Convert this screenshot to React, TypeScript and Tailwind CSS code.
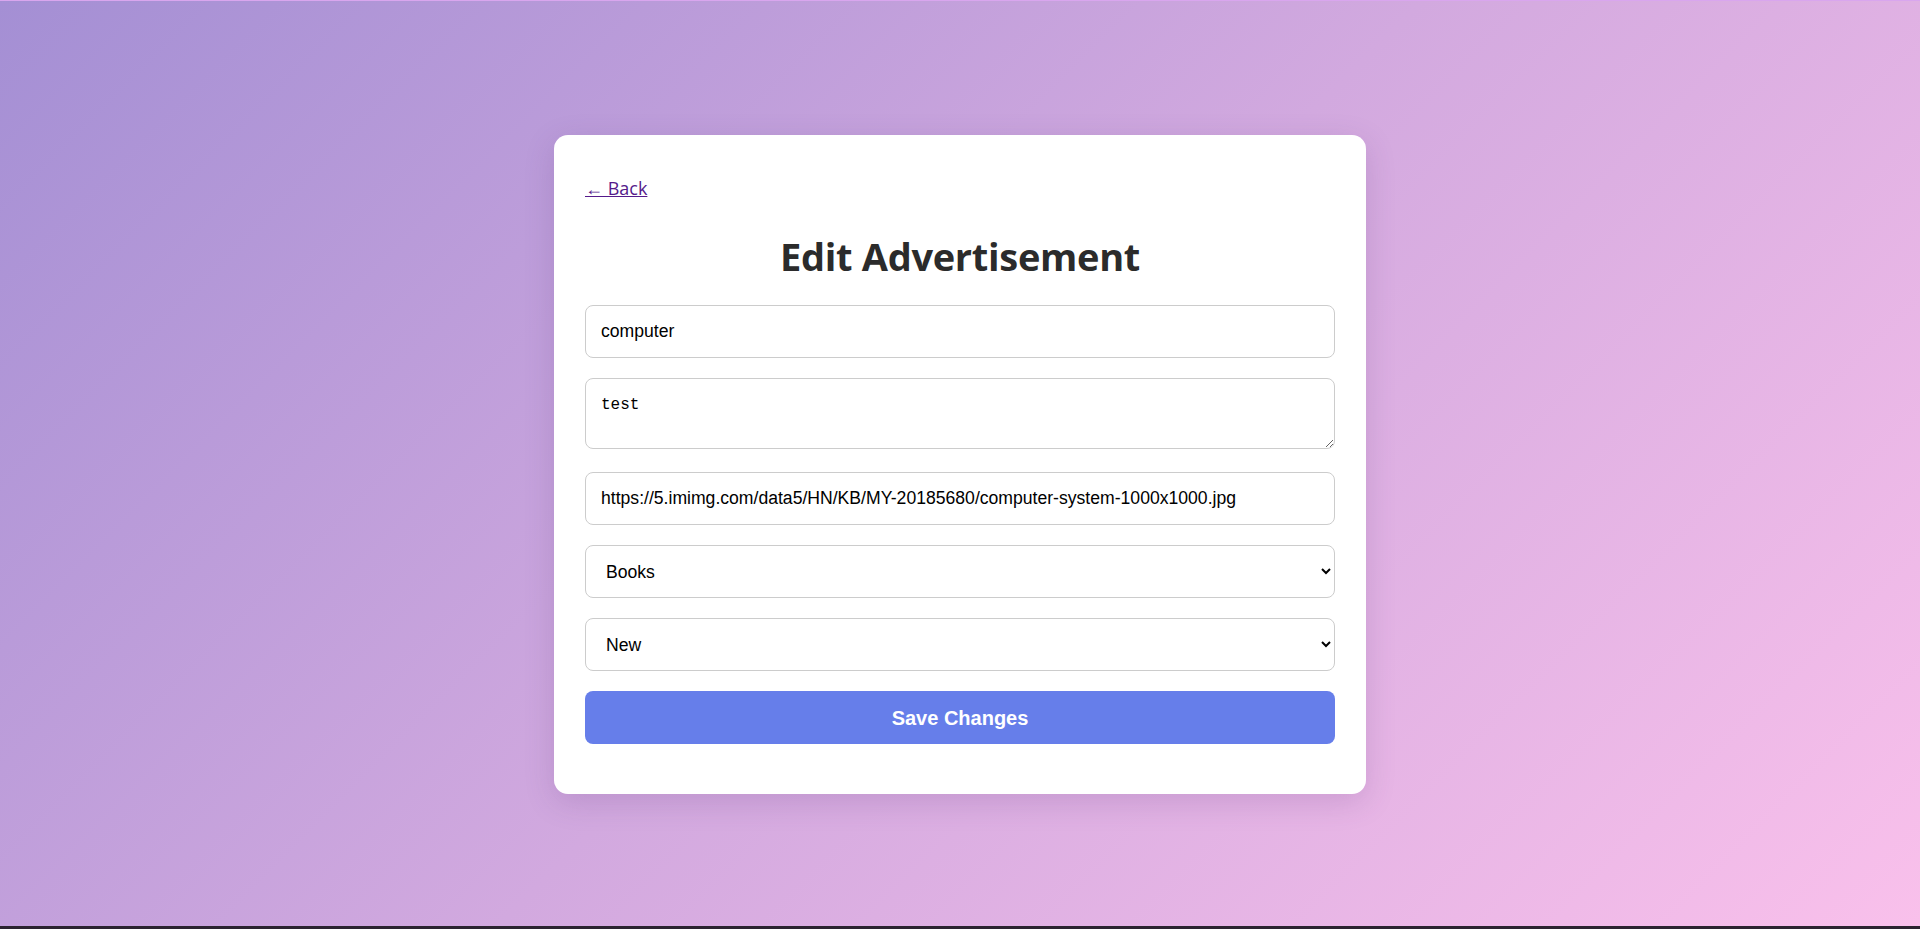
import React from "react";

const fieldClass =
  "block w-full h-[53px] px-[15px] border border-[#cccccc] rounded-[8px] bg-white text-[17.6px] text-black outline-none";

const App = () => {
  return (
    <div className="flex flex-col h-[929px] bg-[#2b2330]">
      <div className="h-px bg-[#d9a6ee]" />
      <div className="flex-1 flex items-start justify-center pt-[134px] bg-[linear-gradient(135deg,#a48fd4_0%,#d2a9df_50%,#f9c0eb_100%)]">
        <div className="w-[812px] bg-white rounded-[14px] pt-[39px] px-[31px] pb-[50px] shadow-[0_8px_30px_rgba(90,50,120,0.18)]">
          <a
            href="#"
            className="inline-block text-[18px] text-[#551a8b] underline font-['Open_Sans',sans-serif] leading-[24px] mt-[2px]"
          >
            ← Back
          </a>

          <h1 className="mt-[29px] mb-[23px] text-center text-[38px] font-bold text-[#2b2b2b] leading-[52px] font-['Open_Sans',sans-serif] tracking-[-0.3px]">
            Edit Advertisement
          </h1>

          <form className="flex flex-col gap-[20px] font-['Liberation_Sans',Arial,sans-serif]">
            <input type="text" defaultValue="computer" className={fieldClass} />
            <textarea
              defaultValue="test"
              className="block w-full h-[71px] px-[15px] pt-[14px] border border-[#cccccc] rounded-[8px] bg-white text-[16px] text-black outline-none font-['Liberation_Mono',monospace] mb-[3px]"
            />
            <input
              type="text"
              defaultValue="https://5.imimg.com/data5/HN/KB/MY-20185680/computer-system-1000x1000.jpg"
              className={fieldClass}
            />
            <select defaultValue="Books" className={fieldClass + " pl-[16px]"}>
              <option>Books</option>
              <option>Electronics</option>
              <option>Furniture</option>
            </select>
            <select defaultValue="New" className={fieldClass + " pl-[16px]"}>
              <option>New</option>
              <option>Used</option>
            </select>
            <button
              type="button"
              className="h-[53px] w-full rounded-[8px] bg-[#667eea] text-white text-[20px] font-bold"
            >
              Save Changes
            </button>
          </form>
        </div>
      </div>
      <div className="h-[3px]" />
    </div>
  );
};

export default App;
